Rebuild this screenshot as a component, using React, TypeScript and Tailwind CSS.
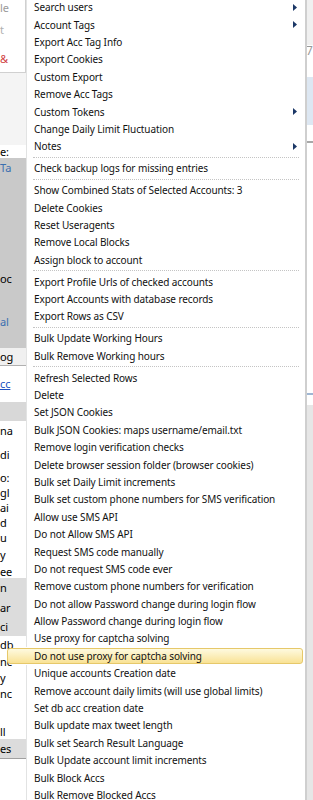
import React from 'react';

type Entry = { label?: string; sub?: boolean; sep?: boolean; hot?: boolean };

const entries: Entry[] = [
  { label: 'Search users', sub: true },
  { label: 'Account Tags', sub: true },
  { label: 'Export Acc Tag Info' },
  { label: 'Export Cookies' },
  { label: 'Custom Export' },
  { label: 'Remove Acc Tags' },
  { label: 'Custom Tokens', sub: true },
  { label: 'Change Daily Limit Fluctuation' },
  { label: 'Notes', sub: true },
  { sep: true },
  { label: 'Check backup logs for missing entries' },
  { sep: true },
  { label: 'Show Combined Stats of Selected Accounts: 3' },
  { label: 'Delete Cookies' },
  { label: 'Reset Useragents' },
  { label: 'Remove Local Blocks' },
  { label: 'Assign block to account' },
  { sep: true },
  { label: 'Export Profile Urls of checked accounts' },
  { label: 'Export Accounts with database records' },
  { label: 'Export Rows as CSV' },
  { sep: true },
  { label: 'Bulk Update Working Hours' },
  { label: 'Bulk Remove Working hours' },
  { sep: true },
  { label: 'Refresh Selected Rows' },
  { label: 'Delete' },
  { label: 'Set JSON Cookies' },
  { label: 'Bulk JSON Cookies: maps username/email.txt' },
  { label: 'Remove login verification checks' },
  { label: 'Delete browser session folder (browser cookies)' },
  { label: 'Bulk set Daily Limit increments' },
  { label: 'Bulk set custom phone numbers for SMS verification' },
  { label: 'Allow use SMS API' },
  { label: 'Do not Allow SMS API' },
  { label: 'Request SMS code manually' },
  { label: 'Do not request SMS code ever' },
  { label: 'Remove custom phone numbers for verification' },
  { label: 'Do not allow Password change during login flow' },
  { label: 'Allow Password change during login flow' },
  { label: 'Use proxy for captcha solving' },
  { label: 'Do not use proxy for captcha solving', hot: true },
  { label: 'Unique accounts Creation date' },
  { label: 'Remove account daily limits (will use global limits)' },
  { label: 'Set db acc creation date' },
  { label: 'Bulk update max tweet length' },
  { label: 'Bulk set Search Result Language' },
  { label: 'Bulk Update account limit increments' },
  { label: 'Bulk Block Accs' },
  { label: 'Bulk Remove Blocked Accs' },
];

// bits of the window behind the menu (left edge)
const leftBits: { h: string; text?: string; cls: string }[] = [
  { h: 'h-[16px]', text: 'le', cls: 'text-[#9a9a9a] border-r border-[#d0d0d0]' },
  { h: 'h-[30px]', text: 't', cls: 'text-[#b0b0b0] border-r border-[#d0d0d0]' },
  { h: 'h-[30px]', text: '&', cls: 'text-[#d04040] border-r border-[#d0d0d0] border-b' },
  { h: 'h-[75px]', cls: 'bg-[#f4f4f4]' },
  { h: 'h-[14px]', text: 'e:', cls: 'text-black bg-white' },
  { h: 'h-[20px]', text: 'Ta', cls: 'text-[#3a6fb0] bg-[#c9c9c9]' },
  { h: 'h-[95px]', cls: 'bg-[#c9c9c9]' },
  { h: 'h-[20px]', text: 'oc', cls: 'text-black bg-[#c9c9c9]' },
  { h: 'h-[25px]', cls: 'bg-[#c9c9c9]' },
  { h: 'h-[20px]', text: 'al', cls: 'text-[#3a6fb0] bg-[#c9c9c9]' },
  { h: 'h-[18px]', cls: 'bg-[#c9c9c9]' },
  { h: 'h-[18px]', text: 'og', cls: 'text-black bg-[#f0f0f0] border-b border-[#b0b0b0]' },
  { h: 'h-[38px]', text: 'cc', cls: 'text-[#2050c0] underline bg-white' },
  { h: 'h-[20px]', cls: 'bg-[#d8d8d8]' },
  { h: 'h-[20px]', text: 'na', cls: 'text-black bg-white' },
  { h: 'h-[30px]', text: 'di', cls: 'text-black bg-white' },
  { h: 'h-[17px]', text: 'o:', cls: 'text-black bg-white' },
  { h: 'h-[15px]', text: 'gl', cls: 'text-black bg-white' },
  { h: 'h-[16px]', text: 'ai', cls: 'text-black bg-white' },
  { h: 'h-[16px]', text: 'd', cls: 'text-black bg-white' },
  { h: 'h-[14px]', text: 'u', cls: 'text-black bg-white' },
  { h: 'h-[22px]', text: 'y', cls: 'text-black bg-white' },
  { h: 'h-[14px]', text: 'ee', cls: 'text-black bg-white' },
  { h: 'h-[20px]', text: 'n', cls: 'text-black bg-[#dcdcdc]' },
  { h: 'h-[20px]', text: 'ar', cls: 'text-black bg-[#dcdcdc]' },
  { h: 'h-[20px]', text: 'ci', cls: 'text-black bg-[#dcdcdc]' },
  { h: 'h-[18px]', text: 'db', cls: 'text-black bg-white' },
  { h: 'h-[17px]', text: 'nc', cls: 'text-black bg-white' },
  { h: 'h-[17px]', text: 'y', cls: 'text-black bg-white' },
  { h: 'h-[17px]', text: 'nc', cls: 'text-black bg-white' },
  { h: 'h-[24px]', cls: 'bg-white' },
  { h: 'h-[14px]', text: 'll', cls: 'text-black bg-white' },
  { h: 'h-[20px]', text: 'es', cls: 'text-black bg-[#dcdcdc]' },
  { h: 'h-[44px]', cls: 'bg-white border-t border-[#a0a0a0]' },
];

function Arrow() {
  return (
    <svg width="4" height="7" viewBox="0 0 4 7" className="mr-[8px]">
      <path d="M0 0 L4 3.5 L0 7 Z" fill="#1b3766" />
    </svg>
  );
}

function MenuRow({ e }: { e: Entry }) {
  if (e.sep) {
    return (
      <div className="flex h-[4.5px]">
        <div className="w-[19px]" />
        <div className="flex flex-1 items-center bg-white border-l border-[#e2e3e3] pl-[6px] pr-[6px]">
          <div className="w-full border-t border-dotted border-[#c4c4c4]" />
        </div>
      </div>
    );
  }
  if (e.hot) {
    return (
      <div className="flex h-[17.4px] items-center">
        <div className="flex h-[16.6px] flex-1 items-center rounded-[3px] border border-[#e6c86a] bg-gradient-to-b from-[#fefadf] to-[#f9e294] pl-[26px]">
          <span className="whitespace-nowrap">{e.label}</span>
        </div>
        <div className="w-[2px] self-stretch bg-white" />
      </div>
    );
  }
  return (
    <div className="flex h-[17.4px]">
      <div className="w-[19px]" />
      <div className="flex flex-1 items-center justify-between bg-white border-l border-[#e2e3e3] pl-[7px]">
        <span className="whitespace-nowrap">{e.label}</span>
        {e.sub && <Arrow />}
      </div>
    </div>
  );
}

export default function App() {
  return (
    <div className="relative h-[800px] w-[313px] overflow-hidden bg-white font-['Noto_Sans',sans-serif] text-[10px] leading-none tracking-[-0.1px] text-[#111]">
      {/* window behind the menu */}
      <div className="flex h-full">
        <div className="flex w-[26px] flex-col text-[11px]">
          {leftBits.map((b, i) => (
            <div key={i} className={`${b.h} ${b.cls} flex items-center overflow-hidden whitespace-nowrap`}>
              {b.text}
            </div>
          ))}
        </div>
        <div className="flex-1" />
        <div className="flex w-[7px] flex-col">
          <div className="h-[45px] bg-[#f0f0f0]" />
          <div className="h-[32px] bg-white text-[12px] text-[#999]">7</div>
          <div className="h-[48px] bg-[#dde7f2]" />
          <div className="h-[16px] bg-white" />
          <div className="h-[2px] bg-[#a8a8a8]" />
          <div className="h-[250px] bg-white" />
          <div className="h-[2px] bg-[#9fb6d3]" />
          <div className="h-[10px] bg-white" />
          <div className="flex-1 bg-[#e6e6e6]" />
        </div>
      </div>

      {/* context menu */}
      <div className="absolute left-[7px] top-[-1.4px] flex w-[300px] flex-col border-r-2 border-[#cfcfcf]">
        {entries.map((e, i) => (
          <MenuRow key={i} e={e} />
        ))}
      </div>
    </div>
  );
}
